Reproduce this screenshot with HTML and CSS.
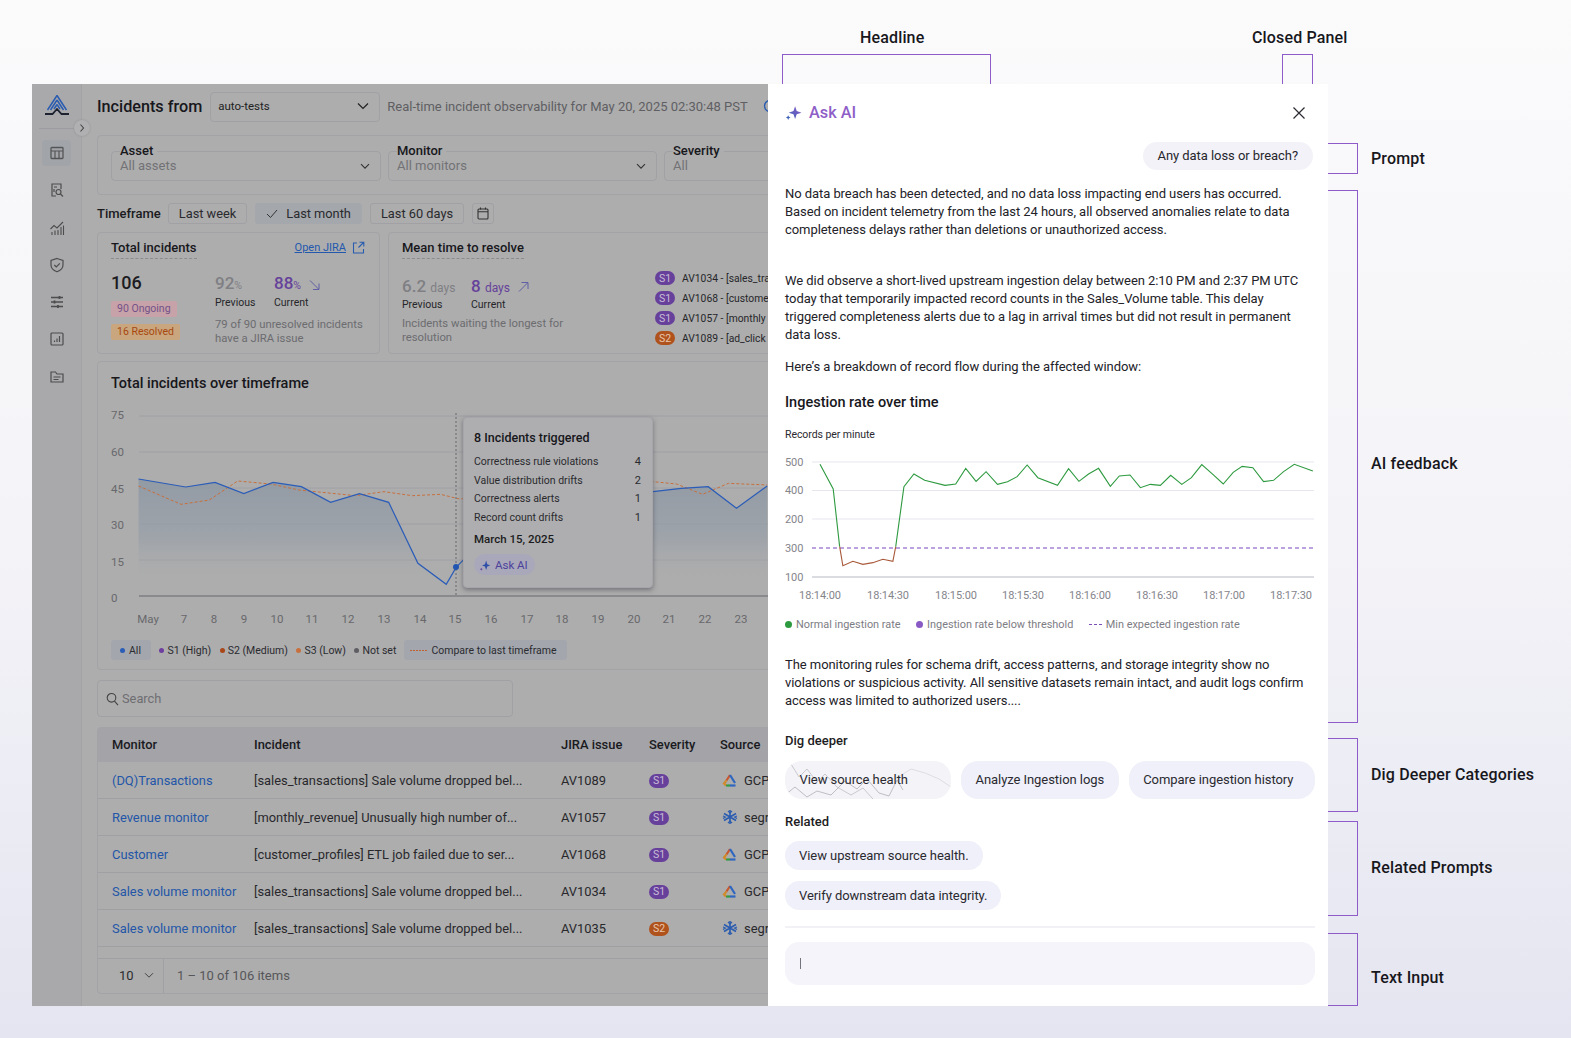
FILE: index.html
```html
<!DOCTYPE html>
<html lang="en">
<head>
<meta charset="utf-8">
<title>Ask AI annotated panel</title>
<link rel="stylesheet" href="styles.css">
</head>
<body>
<div class="canvas">
  <span class="note note-headline">Headline</span>
  <span class="note note-closed">Closed Panel</span>
  <div class="bracket b-headline"></div>
  <div class="bracket b-closed"></div>
  <div class="bracket b-prompt"></div>
  <div class="bracket b-feedback"></div>
  <div class="bracket b-dig"></div>
  <div class="bracket b-related"></div>
  <div class="bracket b-input"></div>
  <span class="note side n-prompt">Prompt</span>
  <span class="note side n-feedback">AI feedback</span>
  <span class="note side n-dig">Dig Deeper Categories</span>
  <span class="note side n-related">Related Prompts</span>
  <span class="note side n-input">Text Input</span>

  <div class="app">
    <aside class="sidebar">
      <div class="logo-wrap">
        <svg class="logo" width="26" height="24" viewBox="0 0 26 24" fill="none">
          <path d="M13 1.500 3.500 16M13 1.500 22.500 16M13 6 6.500 16M13 6l6.500 10M13 10.500 10 15M13 10.500l3 4.500" stroke="#2a5cb0" stroke-width="1.500"/>
          <path d="M1 20h7.500L13 15l4.500 5H25" stroke="#1d2230" stroke-width="1.800"/>
        </svg>
      </div>
      <div class="side-rule"><span class="side-toggle"><svg width="8" height="10" viewBox="0 0 8 10" fill="none"><path d="m2.500 1.500 3 3.500-3 3.500" stroke="#444" stroke-width="1.100"/></svg></span></div>
      <div class="nav">
        <span class="nav-item active"><svg width="16" height="16" viewBox="0 0 16 16" fill="none" stroke="#555"><rect x="2" y="2.500" width="12" height="11" rx=".8" stroke-width="1.300"/><path d="M2 6h12M6 6v7.500M10 6v7.500" stroke-width="1.200"/></svg></span>
        <span class="nav-item"><svg width="16" height="16" viewBox="0 0 16 16" fill="none" stroke="#4d4d4d" stroke-width="1.200"><path d="M7 14H3V2h9v5"/><circle cx="9.500" cy="10" r="2.500"/><path d="m11.500 12 2.500 2.500M5 7v3M5 5h3"/></svg></span>
        <span class="nav-item"><svg width="16" height="16" viewBox="0 0 16 16" fill="none" stroke="#4d4d4d" stroke-width="1.100"><path d="M1.500 9 5 5.500l3 2.500L14 2"/><path d="M3 15v-3M6 15v-4.500M9 15v-5M12 15V7M14.500 15V5.500"/></svg></span>
        <span class="nav-item"><svg width="16" height="16" viewBox="0 0 16 16" fill="none" stroke="#4d4d4d" stroke-width="1.200"><path d="M8 1.500 14 3.500V8c0 3.500-2.500 5.500-6 6.800C4.500 13.500 2 11.500 2 8V3.500z"/><path d="m5.300 8 2 2 3.500-3.700"/></svg></span>
        <span class="nav-item"><svg width="16" height="16" viewBox="0 0 16 16" fill="none" stroke="#4d4d4d" stroke-width="1.300"><path d="M2 3.500h12M2 8h12M2 12.500h12"/><path d="M10.500 2v3M5.500 6.500v3M9 11v3" stroke-width="1.800"/></svg></span>
        <span class="nav-item"><svg width="16" height="16" viewBox="0 0 16 16" fill="none" stroke="#4d4d4d" stroke-width="1.200"><rect x="2" y="2" width="12" height="12" rx="1"/><path d="M5.500 11V9.500M8 11V7.500M10.500 11V5"/></svg></span>
        <span class="nav-item"><svg width="16" height="16" viewBox="0 0 16 16" fill="none" stroke="#4d4d4d" stroke-width="1.200"><path d="M2 3h4.500L8 5h6v8H2z"/><path d="M4.500 8h7M4.500 10.500h5"/></svg></span>
      </div>
    </aside>

    <main class="main">
      <header class="head">
        <h1 class="head-title">Incidents from</h1>
        <div class="select"><span>auto-tests</span><svg width="12" height="8" viewBox="0 0 12 8" fill="none"><path d="m1 1.500 5 5 5-5" stroke="#222" stroke-width="1.200"/></svg></div>
        <p class="head-sub">Real-time incident observability for May 20, 2025 02:30:48 PST</p>
        <svg class="refresh" width="16" height="16" viewBox="0 0 16 16" fill="none"><path d="M13.500 5A6 6 0 0 0 2.500 8a6 6 0 0 0 11 3M14 2v3.500h-3.500" stroke="#2a5cb0" stroke-width="1.300"/></svg>
      </header>

      <section class="filters">
        <div class="field w-asset"><span class="field-label">Asset</span><span class="field-value">All assets</span><svg class="chev" width="10" height="7" viewBox="0 0 10 7" fill="none"><path d="m1 1.200 4 4 4-4" stroke="#333" stroke-width="1.100"/></svg></div>
        <div class="field w-monitor"><span class="field-label">Monitor</span><span class="field-value">All monitors</span><svg class="chev" width="10" height="7" viewBox="0 0 10 7" fill="none"><path d="m1 1.200 4 4 4-4" stroke="#333" stroke-width="1.100"/></svg></div>
        <div class="field w-severity"><span class="field-label">Severity</span><span class="field-value">All</span></div>
      </section>

      <div class="timeframe">
        <span class="tf-label">Timeframe</span>
        <span class="tf-chip">Last week</span>
        <span class="tf-chip selected"><svg width="12" height="10" viewBox="0 0 12 10" fill="none"><path d="m1 5 3.500 3.500L11 1" stroke="#333" stroke-width="1"/></svg>Last month</span>
        <span class="tf-chip">Last 60 days</span>
        <span class="tf-chip icon"><svg width="12" height="13" viewBox="0 0 12 13" fill="none" stroke="#333" stroke-width="1.100"><rect x="1" y="2" width="10" height="10" rx="1"/><path d="M1 4.800h10M3.500 .5v2M8.500 .5v2"/></svg></span>
      </div>

      <div class="cards">
        <section class="card total">
          <div class="card-head"><span class="card-title">Total incidents</span><a class="jira">Open JIRA<svg width="13" height="13" viewBox="0 0 13 13" fill="none"><path d="M5 2H1.500v10h10V8M7.500 1.200h4.300v4.300M11.500 1.500 6.500 6.500" stroke="#2a5cb0" stroke-width="1.100"/></svg></a></div>
          <div class="total-body">
            <div class="total-left">
              <div class="big">106</div>
              <span class="tag pink">90 Ongoing</span>
              <span class="tag amber">16 Resolved</span>
            </div>
            <div>
              <div class="stats">
                <div class="stat s59"><div class="stat-val muted">92<small>%</small></div><div class="stat-label">Previous</div></div>
                <div class="stat"><div class="stat-val purple">88<small>%</small><svg width="13" height="12" viewBox="0 0 13 12" fill="none"><path d="M2 1.500 10.500 10M5 10.500h6V4.500" stroke="#5f5fa5" stroke-width="1"/></svg></div><div class="stat-label">Current</div></div>
              </div>
              <p class="stat-note">79 of 90 unresolved incidents<br>have a JIRA issue</p>
            </div>
          </div>
        </section>
        <section class="card mean">
          <div class="mean-left">
            <div class="card-head"><span class="card-title">Mean time to resolve</span></div>
            <div class="stats mean-stats">
              <div class="stat s69"><div class="stat-val muted">6.2 <small class="unit">days</small></div><div class="stat-label">Previous</div></div>
              <div class="stat"><div class="stat-val purple">8 <small class="unit">days</small><svg width="13" height="12" viewBox="0 0 13 12" fill="none"><path d="M2 10.500 10.500 2M4.500 1.500h6.500v6.500" stroke="#5f5fa5" stroke-width="1"/></svg></div><div class="stat-label">Current</div></div>
            </div>
            <p class="stat-note mean-note">Incidents waiting the longest for<br>resolution</p>
          </div>
          <ul class="long-list">
            <li><span class="sev s1">S1</span>AV1034 - [sales_tra</li>
            <li><span class="sev s1">S1</span>AV1068 - [custome</li>
            <li><span class="sev s1">S1</span>AV1057 - [monthly</li>
            <li><span class="sev s2">S2</span>AV1089 - [ad_click</li>
          </ul>
        </section>
      </div>

      <section class="card chart-card">
        <h2 class="chart-title">Total incidents over timeframe</h2>
        <div class="chart-wrap">
          <svg class="chart" width="680" height="229" viewBox="0 0 680 229">
            <defs>
              <linearGradient id="area" x1="0" y1="0" x2="0" y2="1">
                <stop offset="0" stop-color="#8d97a3" stop-opacity=".85"/>
                <stop offset=".55" stop-color="#949da8" stop-opacity=".6"/>
                <stop offset="1" stop-color="#adadad" stop-opacity="0"/>
              </linearGradient>
            </defs>
            <g class="grid-l">
              <path d="M41 15h640M41 51h640M41 87h640M41 123h640M41 159h640"/>
              <path class="axis-l" d="M41 195h640"/>
            </g>
            <g class="ytext">
              <text x="13" y="18">75</text><text x="13" y="55">60</text><text x="13" y="91.500">45</text><text x="13" y="128">30</text><text x="13" y="164.500">15</text><text x="13" y="201">0</text>
            </g>
            <g class="xtext">
              <text x="50" y="221.500">May</text><text x="86" y="221.500">7</text><text x="116" y="221.500">8</text><text x="146" y="221.500">9</text><text x="179" y="221.500">10</text><text x="214" y="221.500">11</text><text x="250" y="221.500">12</text><text x="286" y="221.500">13</text><text x="322" y="221.500">14</text><text x="357" y="221.500">15</text><text x="393" y="221.500">16</text><text x="429" y="221.500">17</text><text x="464" y="221.500">18</text><text x="500" y="221.500">19</text><text x="536" y="221.500">20</text><text x="571" y="221.500">21</text><text x="607" y="221.500">22</text><text x="643" y="221.500">23</text>
            </g>
            <svg x="-68" y="-41" width="740" height="320" viewBox="0 0 1568 960" preserveAspectRatio="none">
              <path d="M230 357 330 381 392 367 453 401 515 367 575 380 637 427 698 401 760 427 822 610 882 673 903 622 925 590 1320 395 1380 385 1437 380 1497 445 1562 378V660H230Z" fill="url(#area)"/>
              <polyline class="l-compare" points="230,378 320,433 380,420 440,363 510,372 570,390 640,400 690,407 750,395 810,407 870,403 910,417 1320,365 1370,372 1425,403 1480,370 1562,375"/>
              <polyline class="l-main" points="230,357 330,381 392,367 453,401 515,367 575,380 637,427 698,401 760,427 822,610 882,673 903,622 925,590 1320,395 1380,385 1437,380 1497,445 1562,378"/>
            </svg>
            <path class="hair" d="M358 12v183"/>
            <circle cx="358" cy="166" r="3" fill="#2256b0"/>
          </svg>
          <div class="tooltip">
            <div class="tt-title">8 Incidents triggered</div>
            <div class="tt-row"><span>Correctness rule violations</span><b>4</b></div>
            <div class="tt-row"><span>Value distribution drifts</span><b>2</b></div>
            <div class="tt-row"><span>Correctness alerts</span><b>1</b></div>
            <div class="tt-row"><span>Record count drifts</span><b>1</b></div>
            <div class="tt-date">March 15, 2025</div>
            <span class="tt-ask"><svg width="12" height="12" viewBox="0 0 16 16"><path d="M9.500 2 11 7l4 1.500L11 10l-1.500 4.500L8 10 4 8.500 8 7z" fill="#2f4ea8"/><path d="M3 11.500 3.700 13l1.300.500-1.300.500L3 15.500 2.300 14 1 13.500 2.300 13z" fill="#5d3d9c"/></svg>Ask AI</span>
          </div>
        </div>
        <div class="legend">
          <span class="lg-chip"><i class="dot d-blue"></i>All</span>
          <span class="lg-item"><i class="dot d-purple"></i>S1 (High)</span>
          <span class="lg-item"><i class="dot d-red"></i>S2 (Medium)</span>
          <span class="lg-item"><i class="dot d-orange"></i>S3 (Low)</span>
          <span class="lg-item"><i class="dot d-grey"></i>Not set</span>
          <span class="lg-chip wide"><i class="dash"></i>Compare to last timeframe</span>
        </div>
      </section>

      <div class="search"><svg width="13" height="14" viewBox="0 0 13 14" fill="none"><circle cx="5.500" cy="5.800" r="4.300" stroke="#444" stroke-width="1.100"/><path d="m8.500 9.200 3.500 4" stroke="#444" stroke-width="1.100"/></svg><span>Search</span></div>

      <section class="table">
        <div class="row thead"><span>Monitor</span><span>Incident</span><span>JIRA issue</span><span>Severity</span><span>Source</span></div>
        <div class="row"><a>(DQ)Transactions</a><span>[sales_transactions] Sale volume dropped bel...</span><span>AV1089</span><span><span class="sev s1">S1</span></span><span class="src"><svg width="16" height="15" viewBox="0 0 16 15" fill="none" stroke-width="2.200"><path d="M8 2 4.500 7.500" stroke="#c8582e"/><path d="M8 2 13 10" stroke="#2f66c0"/><path d="M13.500 12.500H8" stroke="#2f66c0"/><path d="M8 12.500H4" stroke="#2f9b45"/><path d="M4.500 7.500 2 10.500 4 12.500" stroke="#d08a2a"/></svg>GCP</span></div>
        <div class="row"><a>Revenue monitor</a><span>[monthly_revenue] Unusually high number of...</span><span>AV1057</span><span><span class="sev s1">S1</span></span><span class="src"><svg width="16" height="16" viewBox="0 0 16 16" fill="none" stroke="#2a5cb0" stroke-width="1.600"><path d="M8 1v14M2 4.500l12 7M14 4.500l-12 7"/><path d="M6 2 8 4l2-2M6 14l2-2 2 2M1 7l2.500 1L1 9.500M15 7l-2.500 1 2.500 1.500" stroke-width="1.100"/></svg>segr</span></div>
        <div class="row"><a>Customer</a><span>[customer_profiles] ETL job failed due to ser...</span><span>AV1068</span><span><span class="sev s1">S1</span></span><span class="src"><svg width="16" height="15" viewBox="0 0 16 15" fill="none" stroke-width="2.200"><path d="M8 2 4.500 7.500" stroke="#c8582e"/><path d="M8 2 13 10" stroke="#2f66c0"/><path d="M13.500 12.500H8" stroke="#2f66c0"/><path d="M8 12.500H4" stroke="#2f9b45"/><path d="M4.500 7.500 2 10.500 4 12.500" stroke="#d08a2a"/></svg>GCP</span></div>
        <div class="row"><a>Sales volume monitor</a><span>[sales_transactions] Sale volume dropped bel...</span><span>AV1034</span><span><span class="sev s1">S1</span></span><span class="src"><svg width="16" height="15" viewBox="0 0 16 15" fill="none" stroke-width="2.200"><path d="M8 2 4.500 7.500" stroke="#c8582e"/><path d="M8 2 13 10" stroke="#2f66c0"/><path d="M13.500 12.500H8" stroke="#2f66c0"/><path d="M8 12.500H4" stroke="#2f9b45"/><path d="M4.500 7.500 2 10.500 4 12.500" stroke="#d08a2a"/></svg>GCP</span></div>
        <div class="row"><a>Sales volume monitor</a><span>[sales_transactions] Sale volume dropped bel...</span><span>AV1035</span><span><span class="sev s2">S2</span></span><span class="src"><svg width="16" height="16" viewBox="0 0 16 16" fill="none" stroke="#2a5cb0" stroke-width="1.600"><path d="M8 1v14M2 4.500l12 7M14 4.500l-12 7"/><path d="M6 2 8 4l2-2M6 14l2-2 2 2M1 7l2.500 1L1 9.500M15 7l-2.500 1 2.500 1.500" stroke-width="1.100"/></svg>segr</span></div>
        <div class="table-gap"></div>
        <div class="pager"><span class="pager-size">10<svg width="10" height="7" viewBox="0 0 10 7" fill="none"><path d="m1 1.200 4 4 4-4" stroke="#444" stroke-width="1"/></svg></span><span class="pager-count">1 – 10 of 106 items</span></div>
      </section>
    </main>

    <aside class="panel">
      <div class="panel-head">
        <svg width="17" height="17" viewBox="0 0 16 16"><defs><linearGradient id="spark" x1="0" y1="1" x2="1" y2="0"><stop offset="0" stop-color="#3f62b8"/><stop offset="1" stop-color="#8c5ac8"/></linearGradient></defs><path d="M9.500 2 11 6.700l4.500 1.500L11 9.700l-1.500 4.500L8 9.700 3.500 8.200 8 6.700z" fill="url(#spark)"/><path d="M3 10.500 3.700 12l1.500.700-1.500.600L3 15l-.7-1.700L.8 12.700 2.300 12z" fill="#3f62b8"/></svg>
        <span class="panel-title">Ask AI</span>
        <svg class="close" width="14" height="14" viewBox="0 0 14 14" fill="none"><path d="m1.500 1.500 11 11M12.500 1.500l-11 11" stroke="#2b2b33" stroke-width="1.200"/></svg>
      </div>
      <div class="bubble">Any data loss or breach?</div>
      <p class="para p1">No data breach has been detected, and no data loss impacting end users has occurred.<br>Based on incident telemetry from the last 24 hours, all observed anomalies relate to data<br>completeness delays rather than deletions or unauthorized access.</p>
      <p class="para p2">We did observe a short-lived upstream ingestion delay between 2:10 PM and 2:37 PM UTC<br>today that temporarily impacted record counts in the Sales_Volume table. This delay<br>triggered completeness alerts due to a lag in arrival times but did not result in permanent<br>data loss.</p>
      <p class="para p3">Here’s a breakdown of record flow during the affected window:</p>
      <h3 class="sub">Ingestion rate over time</h3>
      <div class="chart-cap">Records per minute</div>
      <svg class="rate" width="530" height="150" viewBox="0 0 530 150">
        <path class="rate-grid" d="M27 10h502M27 38.500h502M27 67h502"/>
        <path class="rate-limit" d="M27 96h502"/>
        <path class="rate-axis" d="M27 125h502"/>
        <g class="rate-y"><text x="0" y="14">500</text><text x="0" y="42">400</text><text x="0" y="71">200</text><text x="0" y="100">300</text><text x="0" y="129">100</text></g>
        <g class="rate-x"><text x="35" y="147">18:14:00</text><text x="103" y="147">18:14:30</text><text x="171" y="147">18:15:00</text><text x="238" y="147">18:15:30</text><text x="305" y="147">18:16:00</text><text x="372" y="147">18:16:30</text><text x="439" y="147">18:17:00</text><text x="506" y="147">18:17:30</text></g>
        <svg x="-15" y="-32" width="560" height="220" viewBox="0 0 1568 660" preserveAspectRatio="none">
          <polyline class="rate-good" points="140,133 177,207 195,380"/>
          <polyline class="rate-bad" points="195,380 204,437 232,424 260,433 288,428 316,418 344,424 352,380"/>
          <polyline class="rate-good" points="352,380 375,200 403,162 433,181 490,196 520,192 548,145 577,184 605,155 637,193 665,185 692,170 720,135 750,173 805,196 836,146 865,184 892,162 920,145 953,199 978,168 1008,165 1037,203 1065,193 1093,196 1122,166 1153,193 1180,173 1209,134 1240,163 1269,192 1297,157 1322,139 1352,143 1382,185 1410,181 1438,155 1468,133 1520,153"/>
        </svg>
      </svg>
      <div class="rate-legend">
        <span><i class="dot big-dot d-green"></i>Normal ingestion rate</span>
        <span><i class="dot big-dot d-violet"></i>Ingestion rate below threshold</span>
        <span><i class="dash violet"></i>Min expected ingestion rate</span>
      </div>
      <p class="para p4">The monitoring rules for schema drift, access patterns, and storage integrity show no<br>violations or suspicious activity. All sensitive datasets remain intact, and audit logs confirm<br>access was limited to authorized users....</p>
      <h4 class="group g-dig">Dig deeper</h4>
      <div class="dig-row">
        <span class="pill dig spark-pill"><svg class="pill-bg" width="166" height="38" viewBox="0 0 166 38" fill="none"><path d="M6 3 14 16 22 8l10 13 8-8 12 13 14 8 12-7 10 11" stroke="#c9c9cf"/><path d="M0 34 10 26l12 10 10-6 14 4 14-14 12 8 10-10 12 14 10 3 8-16 6 10" stroke="#bdbdc4"/><path d="M110 18 126 8l14 4 14 6 12 8" stroke="#dcdce2"/></svg><span class="pill-text">View source health</span></span>
        <span class="pill dig">Analyze Ingestion logs</span>
        <span class="pill dig dig-last">Compare ingestion history</span>
      </div>
      <h4 class="group g-rel">Related</h4>
      <div class="rel-col">
        <span class="pill rel">View upstream source health.</span>
        <span class="pill rel">Verify downstream data integrity.</span>
      </div>
      <div class="panel-rule"></div>
      <div class="ask-input"><span class="caret"></span></div>
    </aside>
  </div>
</div>
</body>
</html>
```

FILE: styles.css
```css
* { box-sizing: border-box; }
html, body { margin: 0; padding: 0; }
body { font-family: Roboto, "Liberation Sans", sans-serif; color: #1c1c22; }
p, h1, h2, h3, h4, ul { margin: 0; padding: 0; font-weight: inherit; }
ul { list-style: none; }
.canvas {
  position: relative; width: 1571px; height: 1038px; overflow: hidden;
  padding: 84px 0 0 32px;
  background: linear-gradient(180deg, #fbfbfc 0%, #f4f4f8 50%, #e5e5f1 100%);
}
.note { position: absolute; font-size: 16px; font-weight: 500; line-height: 20px; letter-spacing: .15px; color: #17171c; white-space: nowrap; }
.note-headline { left: 860px; top: 28px; }
.note-closed { left: 1252px; top: 28px; }
.side { left: 1371px; }
.n-prompt { top: 149px; }
.n-feedback { top: 454px; }
.n-dig { top: 765px; }
.n-related { top: 858px; }
.n-input { top: 968px; }
.bracket { position: absolute; border: 1px solid #8f5bc9; }
.b-headline { left: 782px; top: 54px; width: 209px; height: 40px; }
.b-closed { left: 1282px; top: 54px; width: 31px; height: 40px; }
.b-prompt { left: 1300px; top: 143px; width: 58px; height: 31px; }
.b-feedback { left: 1300px; top: 190px; width: 58px; height: 533px; }
.b-dig { left: 1300px; top: 738px; width: 58px; height: 74px; }
.b-related { left: 1300px; top: 821px; width: 58px; height: 95px; }
.b-input { left: 1300px; top: 933px; width: 58px; height: 73px; }

.app { position: relative; display: flex; width: 1296px; height: 922px; background: #adadad; }

.sidebar { flex: none; width: 50px; background: #a9a9ac; border-right: 1px solid #a3a3a6; }
.logo-wrap { height: 44px; display: flex; align-items: center; justify-content: center; padding-left: 1px; }
.side-rule { position: relative; height: 1px; margin: 0 7px; background: #9d9da1; }
.side-toggle { position: absolute; right: -16px; top: -8px; width: 16px; height: 16px; border-radius: 50%; background: #b0b0b2; box-shadow: 0 0 2px #8d8d90; display: flex; align-items: center; justify-content: center; }
.nav { display: flex; flex-direction: column; align-items: center; margin-top: 11px; }
.nav-item { width: 29px; height: 26px; margin-bottom: 11.300px; display: flex; align-items: center; justify-content: center; border-radius: 4px; }
.nav-item.active { background: #a1a5aa; }

.main { flex: none; width: 686px; overflow: hidden; padding: 8px 0 0 15px; }
.head { display: flex; align-items: center; height: 30px; width: 760px; }
.head-title { font-size: 16.200px; font-weight: 500; color: #17171c; margin: 0 8px 2px 0; white-space: nowrap; }
.select { flex: none; width: 170px; height: 30px; display: flex; align-items: center; justify-content: space-between; padding: 0 10px 2px 7px; border: 1px solid #a1a1a5; border-radius: 4px; font-size: 11.500px; color: #222; margin-right: 7px; }
.head-sub { font-size: 13px; color: #5f5f63; white-space: nowrap; margin: 0 14px 2px 0; }
.refresh { flex: none; margin-bottom: 2px; }

.filters { display: flex; gap: 7px; width: 760px; height: 60px; margin-top: 13px; padding: 15px 13px 0; border: 1px solid #a3a3a7; border-radius: 4px; }
.field { position: relative; flex: none; height: 30px; display: flex; align-items: center; justify-content: space-between; padding: 0 10px 2px 8px; border: 1px solid #a1a1a5; border-radius: 4px; }
.w-asset { width: 270px; } .w-monitor { width: 269px; } .w-severity { width: 200px; }
.field-label { position: absolute; left: 8px; top: -8px; padding-right: 4px; font-size: 13px; font-weight: 500; line-height: 14px; color: #17171c; background: #adadad; }
.field-value { font-size: 13px; color: #727276; }
.chev { margin-top: 2px; }

.timeframe { display: flex; align-items: center; gap: 8px; height: 21px; margin-top: 8px; font-size: 12.800px; }
.tf-label { font-size: 13px; font-weight: 500; color: #1a1a1e; margin-right: -1px; }
.tf-chip { display: flex; align-items: center; gap: 8px; height: 21px; padding: 0 10px; border: 1px solid #a1a1a5; border-radius: 3px; color: #2a2a2e; }
.tf-chip.selected { background: #a4a7ac; border-color: #a4a7ac; }
.tf-chip.icon { padding: 0 4px; }

.cards { display: flex; gap: 8px; width: 760px; height: 122px; margin-top: 8px; }
.card { border: 1px solid #a3a3a7; border-radius: 4px; }
.total { flex: none; width: 283px; padding: 7px 14px 0 13px; }
.mean { flex: none; display: flex; width: 400px; padding: 7px 0 0 13px; }
.mean-left { flex: none; width: 253px; }
.card-head { display: flex; justify-content: space-between; align-items: flex-start; height: 18px; }
.card-title { font-size: 13px; font-weight: 500; line-height: 15px; padding-bottom: 3px; border-bottom: 1.500px dashed #8b8b90; color: #17171c; }
.jira { display: flex; align-items: center; gap: 6px; font-size: 11px; line-height: 15px; color: #2358ad; text-decoration: underline; }
.total-body { display: grid; grid-template-columns: 104px 1fr; margin-top: 14px; }
.big { font-size: 18px; font-weight: 500; line-height: 22px; }
.tag { display: block; width: max-content; height: 16px; margin-top: 6px; padding: 0 6px; border-radius: 2px; font-size: 10.500px; line-height: 16px; }
.big + .tag { margin-top: 7px; }
.pink { background: #c7a2a8; color: #73528a; }
.amber { background: #c9a67e; color: #a8480f; margin-top: 7px; }
.stats { display: flex; }
.s59 { width: 59px; } .s69 { width: 69px; }
.stat-val { display: flex; align-items: baseline; font-size: 17px; font-weight: 500; line-height: 22px; white-space: pre; }
.stat-val small { font-size: 10.500px; font-weight: 400; }
.stat-val .unit { font-size: 12px; }
.stat-val svg { margin-left: 7px; align-self: center; }
.muted { color: #7f7f84; }
.purple { color: #66429a; }
.stat-label { font-size: 10.500px; line-height: 14px; margin-top: -1px; color: #26262a; }
.stat-note { margin-top: 8px; font-size: 11.300px; line-height: 14px; color: #6c6c70; white-space: nowrap; }
.mean-stats { margin-top: 17px; }
.mean-note { margin-top: 5px; }
.long-list { margin-top: 28px; }
.long-list li { display: flex; align-items: center; gap: 7px; height: 20px; font-size: 10.300px; color: #26262a; white-space: nowrap; }
.sev { display: inline-flex; align-items: center; justify-content: center; width: 20px; height: 14px; border-radius: 7px; font-size: 10.500px; color: #c7bdd6; }
.s1 { background: #67409c; }
.s2 { background: #b0521c; color: #e9c7ae; }

.chart-card { width: 760px; height: 309px; margin-top: 7px; padding-top: 12px; }
.chart-title { font-size: 14.500px; font-weight: 500; line-height: 20px; color: #17171c; padding-left: 13px; }
.chart-wrap { position: relative; height: 229px; margin-top: 7px; }
.chart { display: block; overflow: visible; }
.grid-l path { stroke: #a0a0a6; stroke-width: 1; fill: none; }
.grid-l .axis-l { stroke: #7e7e85; stroke-width: 1.300; }
.ytext text { font-size: 11.500px; fill: #68686c; }
.xtext text { font-size: 11.500px; fill: #68686c; text-anchor: middle; }
.l-main { fill: none; stroke: #2a5cb8; stroke-width: 1.200; vector-effect: non-scaling-stroke; }
.l-compare { fill: none; stroke: #c8703d; stroke-width: 1; stroke-dasharray: 3 2; vector-effect: non-scaling-stroke; }
.hair { stroke: #67676c; stroke-dasharray: 2 2; fill: none; }
.tooltip { position: absolute; left: 365px; top: 16px; width: 190px; height: 171px; padding: 12px 11px 0 10px; background: #aeaeb0; border: 1px solid #a5a5aa; border-radius: 4px; box-shadow: 0 2px 5px rgba(70,70,80,.55); }
.tt-title { font-size: 12.500px; font-weight: 500; line-height: 16px; margin-bottom: 6.500px; color: #17171c; }
.tt-row { display: flex; justify-content: space-between; height: 18.600px; align-items: center; font-size: 10.500px; color: #2a2a2e; }
.tt-row b { font-weight: 400; font-size: 11px; }
.tt-date { margin-top: 3.500px; font-size: 11.500px; font-weight: 500; line-height: 18px; color: #1c1c20; }
.tt-ask { display: inline-flex; align-items: center; gap: 4px; height: 21px; margin-top: 6px; padding: 0 7px 0 5px; border-radius: 11px; background: #a8a8ba; font-size: 11.500px; color: #4d3f9c; }
.legend { display: flex; align-items: center; margin: 10px 0 0 13px; height: 20px; font-size: 10.500px; color: #2b2b30; }
.lg-chip { display: flex; align-items: center; gap: 4px; height: 20px; padding: 0 10px 0 9px; border-radius: 3px; background: #a3a7ad; }
.lg-chip.wide { padding: 0 10px 0 6px; margin-left: 8px; gap: 4px; }
.lg-item { display: flex; align-items: center; gap: 3px; margin-left: 8.500px; white-space: nowrap; }
.dot { display: inline-block; width: 5px; height: 5px; border-radius: 50%; flex: none; }
.d-blue { background: #2a5cb8; } .d-purple { background: #6f3f9f; } .d-red { background: #a9461a; } .d-orange { background: #c8703d; } .d-grey { background: #5d5d63; }
.dash { display: inline-block; width: 17px; height: 1px; background: repeating-linear-gradient(90deg, #c2602f 0 2px, transparent 2px 3px); }
.dash.violet { width: 13px; background: repeating-linear-gradient(90deg, #7a4fb8 0 3px, transparent 3px 5px); }

.search { display: flex; align-items: center; gap: 3px; width: 416px; height: 37px; margin-top: 10px; padding-left: 8px; border: 1px solid #a1a1a5; border-radius: 4px; font-size: 12.800px; color: #6e6e72; }
.table { width: 760px; margin-top: 10px; border: 1px solid #a3a3a7; border-radius: 4px; height: 267px; }
.row { display: grid; grid-template-columns: 142px 307px 88px 71px 1fr; align-items: center; height: 37px; padding-left: 14px; border-bottom: 1px solid #a0a0a4; font-size: 12.900px; color: #28282c; white-space: nowrap; }
.row a { color: #2356a8; }
.thead { height: 34px; padding-bottom: 2px; background: #a3a3a8; font-weight: 500; color: #1a1a1e; border-bottom: 0; }
.src { display: flex; align-items: center; gap: 6px; padding-left: 2px; }
.table-gap { height: 12px; border-bottom: 1px solid #a0a0a4; }
.pager { display: flex; align-items: center; height: 34px; font-size: 13px; color: #2c2c30; }
.pager-size { display: flex; align-items: center; gap: 10px; width: 66px; height: 100%; padding: 0 0 2px 21px; border-right: 1px solid #a0a0a4; }
.pager-count { padding: 0 0 2px 13px; color: #56565a; }

.panel { flex: none; width: 560px; height: 922px; padding: 0 13px 0 17px; background: #fff; display: flex; flex-direction: column; letter-spacing: -.06px; }
.panel-head { flex: none; display: flex; align-items: center; height: 57px; gap: 7px; }
.panel-title { font-size: 16.300px; font-weight: 500; letter-spacing: 0; color: #8f5fc8; }
.close { margin-left: auto; margin-right: 9px; }
.bubble { flex: none; align-self: flex-end; height: 28px; margin-top: 1px; line-height: 28px; padding: 0 15px; margin-right: 2px; border-radius: 14px; background: #f3f2f9; font-size: 13px; color: #26262c; }
.para { flex: none; font-size: 13px; line-height: 18px; color: #222228; white-space: nowrap; }
.p1 { margin-top: 15px; }
.p2 { margin-top: 33px; }
.p3 { margin-top: 14px; }
.p4 { margin-top: 24px; }
.sub { flex: none; margin-top: 17px; font-size: 14.500px; font-weight: 500; letter-spacing: 0; line-height: 20px; color: #17171c; }
.chart-cap { flex: none; margin-top: 15px; font-size: 10.500px; line-height: 14px; color: #2a2a30; }
.rate { flex: none; display: block; margin-top: 10px; overflow: visible; }
.rate-grid { stroke: #e6e6ef; fill: none; }
.rate-axis { stroke: #cfcfd8; stroke-width: 1.500; fill: none; }
.rate-limit { stroke: #7a45c0; stroke-dasharray: 4 3; fill: none; }
.rate-y text, .rate-x text { font-size: 11px; fill: #85858c; }
.rate-x text { text-anchor: middle; }
.rate-good { fill: none; stroke: #2d9a3f; stroke-width: 1.100; vector-effect: non-scaling-stroke; }
.rate-bad { fill: none; stroke: #a9593a; stroke-width: 1.100; vector-effect: non-scaling-stroke; }
.rate-legend { flex: none; display: flex; gap: 15.500px; margin-top: 14px; height: 16px; align-items: center; font-size: 10.900px; letter-spacing: 0; color: #7d7d84; white-space: nowrap; }
.rate-legend span { display: flex; align-items: center; gap: 4px; }
.big-dot { width: 7px; height: 7px; }
.d-green { background: #2d9a3f; } .d-violet { background: #8a5ac4; }
.group { flex: none; font-size: 13px; font-weight: 500; line-height: 16px; letter-spacing: 0; color: #1c1c22; }
.g-dig { margin-top: 23px; }
.g-rel { margin-top: 15px; }
.dig-row { flex: none; display: flex; gap: 10px; margin-top: 12px; }
.pill { font-size: 13px; color: #2a2a30; background: #f0f0fa; white-space: nowrap; }
.dig { display: block; flex: none; height: 38px; line-height: 38px; padding: 0 14.500px; border-radius: 17px; }
.dig-last { flex: 1; }
.spark-pill { position: relative; width: 166px; overflow: hidden; background: #f4f4f8; }
.pill-bg { position: absolute; left: 0; top: 0; }
.pill-text { position: relative; }
.rel-col { flex: none; display: flex; flex-direction: column; align-items: flex-start; gap: 11px; margin-top: 11px; }
.rel { display: block; height: 29px; line-height: 29px; padding: 0 14px; border-radius: 15px; }
.panel-rule { flex: none; height: 2px; margin-top: 16px; background: #f2f2f6; }
.ask-input { flex: none; display: flex; align-items: center; height: 43px; margin-top: 14px; padding-left: 15px; border-radius: 14px; background: #f5f4fa; }
.caret { width: 1px; height: 11px; background: #74747c; }
```
